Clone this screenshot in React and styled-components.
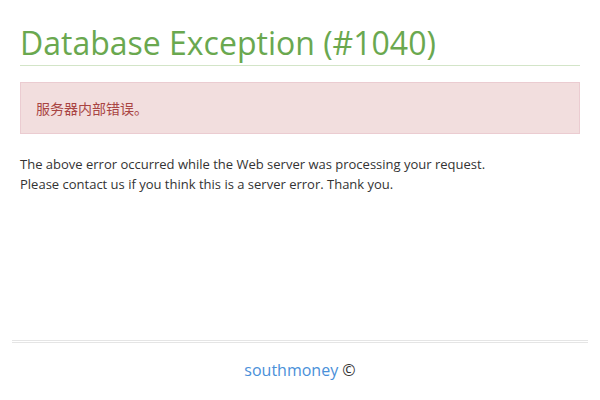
import React from "react";
import styled, { createGlobalStyle } from "styled-components";

const Global = createGlobalStyle`
  html, body { margin: 0; padding: 0; background: #fff; }
  body { font-family: "Open Sans", "Noto Sans CJK SC", sans-serif; color: #333; font-size: 13px; line-height: 20px; }
`;

const Page = styled.div`
  min-height: 400px;
  display: flex;
  flex-direction: column;
`;

const Main = styled.main`
  flex: 1;
  padding: 0 20px;
`;

const Title = styled.h1`
  margin: 23px 0 16px;
  padding-bottom: 2px;
  font-size: 32px;
  line-height: 40px;
  font-weight: 400;
  color: #6aa84f;
  border-bottom: 1px solid #d3e5c8;
`;

const Alert = styled.div`
  padding: 15px;
  background: #f2dede;
  border: 1px solid #ebccd1;
  color: #a94442;
  font-family: "Noto Sans CJK SC", sans-serif;
  font-size: 14px;
  line-height: 20px;
  margin-bottom: 20px;
`;

const Text = styled.p`
  margin: 0;
  font-size: 13px;
  line-height: 20px;
  color: #333;
`;

const Footer = styled.footer`
  margin: 0 12px;
  height: 60px;
  display: flex;
  flex-direction: column;
`;

const Rule = styled.div`
  height: 1px;
  border-top: 1px solid #e5e5e5;
  border-bottom: 1px solid #e5e5e5;
`;

const FooterText = styled.div`
  text-align: center;
  padding-top: 15px;
  font-size: 16px;
  line-height: 24px;
  color: #333;
`;

const Link = styled.a`
  color: #4a90d9;
  text-decoration: none;
`;

export default function App() {
  return (
    <Page>
      <Global />
      <Main>
        <Title>Database Exception (#1040)</Title>
        <Alert>服务器内部错误。</Alert>
        <Text>
          The above error occurred while the Web server was processing your request.
          <br />
          Please contact us if you think this is a server error. Thank you.
        </Text>
      </Main>
      <Footer>
        <Rule />
        <FooterText>
          <Link href="#">southmoney</Link> ©
        </FooterText>
      </Footer>
    </Page>
  );
}
